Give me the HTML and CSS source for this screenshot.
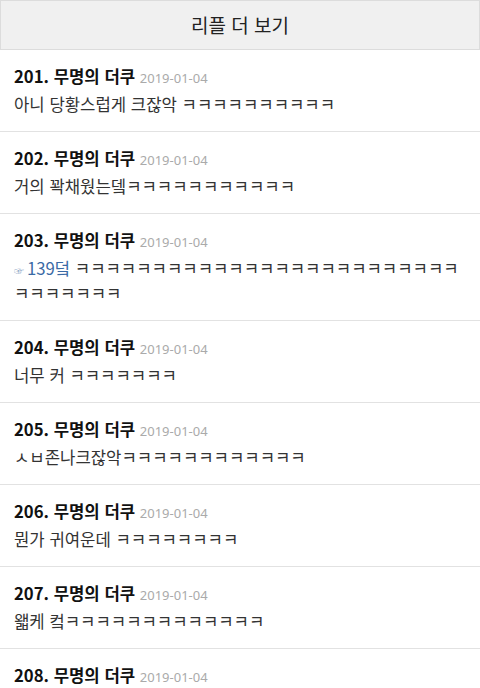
FILE: index.html
```html
<!DOCTYPE html>
<html lang="ko">
<head>
  <meta charset="UTF-8">
  <title>리플 더 보기</title>
  <link rel="stylesheet" href="styles.css">
</head>
<body>
  <div class="header">리플 더 보기</div>

  <ul class="replies">
    <li class="reply">
      <div class="reply-head"><strong>201. 무명의 더쿠</strong> <span class="date">2019-01-04</span></div>
      <div class="reply-body">아니 당황스럽게 크잖악 ㅋㅋㅋㅋㅋㅋㅋㅋㅋㅋ</div>
    </li>
    <li class="reply">
      <div class="reply-head"><strong>202. 무명의 더쿠</strong> <span class="date">2019-01-04</span></div>
      <div class="reply-body">거의 꽉채웠는뎈ㅋㅋㅋㅋㅋㅋㅋㅋㅋㅋㅋ</div>
    </li>
    <li class="reply">
      <div class="reply-head"><strong>203. 무명의 더쿠</strong> <span class="date">2019-01-04</span></div>
      <div class="reply-body"><a class="ref" href="#"><span class="hand">☞</span>139덬</a> ㅋㅋㅋㅋㅋㅋㅋㅋㅋㅋㅋㅋㅋㅋㅋㅋㅋㅋㅋㅋㅋㅋㅋㅋㅋ ㅋㅋㅋㅋㅋㅋㅋ</div>
    </li>
    <li class="reply">
      <div class="reply-head"><strong>204. 무명의 더쿠</strong> <span class="date">2019-01-04</span></div>
      <div class="reply-body">너무 커 ㅋㅋㅋㅋㅋㅋㅋ</div>
    </li>
    <li class="reply">
      <div class="reply-head"><strong>205. 무명의 더쿠</strong> <span class="date">2019-01-04</span></div>
      <div class="reply-body">ㅅㅂ존나크잖악ㅋㅋㅋㅋㅋㅋㅋㅋㅋㅋㅋㅋ</div>
    </li>
    <li class="reply">
      <div class="reply-head"><strong>206. 무명의 더쿠</strong> <span class="date">2019-01-04</span></div>
      <div class="reply-body">뭔가 귀여운데 ㅋㅋㅋㅋㅋㅋㅋㅋ</div>
    </li>
    <li class="reply">
      <div class="reply-head"><strong>207. 무명의 더쿠</strong> <span class="date">2019-01-04</span></div>
      <div class="reply-body">왧케 컼ㅋㅋㅋㅋㅋㅋㅋㅋㅋㅋㅋㅋㅋ</div>
    </li>
    <li class="reply">
      <div class="reply-head"><strong>208. 무명의 더쿠</strong> <span class="date">2019-01-04</span></div>
    </li>
  </ul>
</body>
</html>
```

FILE: styles.css
```css
body {
  margin: 0;
  background: #fff;
  font-family: "Noto Sans CJK KR", "Noto Sans", sans-serif;
  color: #222;
}

.header {
  background: #f0f0f0;
  border: 1px solid #dcdcdc;
  height: 48px;
  line-height: 47px;
  text-align: center;
  font-size: 19px;
  color: #222;
}

.replies {
  list-style: none;
  margin: 0;
  padding: 0;
}

.reply {
  padding: 13px 14px 14px;
  border-bottom: 1px solid #e2e2e2;
}

.reply-head {
  font-size: 16.7px;
  line-height: 26px;
  color: #111;
}

.reply-head strong {
  font-weight: bold;
}

.date {
  font-family: "Noto Sans", sans-serif;
  font-size: 13px;
  color: #aaa;
}

.reply-body {
  margin-top: 1px;
  font-size: 16.7px;
  line-height: 25px;
  color: #333;
}

.ref {
  color: #3a6aa5;
  text-decoration: none;
}

.hand {
  display: inline-block;
  font-size: 10px;
  line-height: 1;
  color: #8aa4c4;
  margin-right: 3px;
}
```
